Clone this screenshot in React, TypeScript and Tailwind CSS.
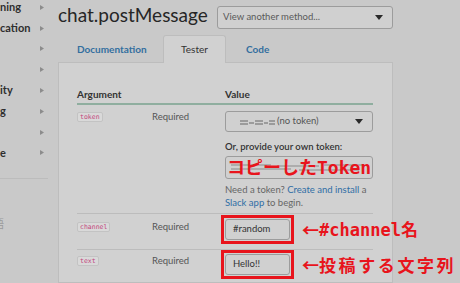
const navItems = ["ning", "cation", "", "", "ity", "g", "", "e"];

function Caret({ color = "#2a2a2a" }: { color?: string }) {
  return (
    <svg width="8" height="5" viewBox="0 0 8 5">
      <path d="M0 0h8L4 5z" fill={color} />
    </svg>
  );
}

function Code({ children }: { children: string }) {
  return (
    <span className="inline-block rounded-[2px] border border-[#c3c3c3] bg-[#d9d9d9] px-[2px] font-['DejaVu_Sans_Mono',monospace] text-[6.5px] leading-[8px] text-[#c2437b]">
      {children}
    </span>
  );
}

function Annotation({ label, wide }: { label: string; wide?: boolean }) {
  return (
    <span className="ml-[8px] flex items-center whitespace-nowrap text-[17px] font-bold leading-[20px] text-[#e8141c]">
      <span className="font-['Noto_Sans_CJK_JP',sans-serif]">←</span>
      <span
        className={
          wide
            ? "font-['Noto_Sans_CJK_JP',sans-serif] tracking-[2.6px]"
            : "font-['DejaVu_Sans_Mono','Noto_Sans_CJK_JP',monospace]"
        }
      >
        {label}
      </span>
    </span>
  );
}

function Sidebar() {
  return (
    <aside className="flex w-[58px] shrink-0 flex-col overflow-hidden">
      <div className="mt-[-3px] flex flex-col">
        {navItems.map((t, i) => (
          <div key={i} className="flex h-[20.8px] items-center justify-between pr-[14px]">
            <span className="whitespace-nowrap text-[11px] font-bold text-[#2e2e2e]">{t}</span>
            <svg width="4" height="5" viewBox="0 0 4 5">
              <path d="M0 0l4 2.5L0 5z" fill="#8c8c8c" />
            </svg>
          </div>
        ))}
      </div>
      <div className="mt-[14.6px] mr-[10px] h-px bg-[#bcbcbc]" />
      <div className="mt-[36px] ml-[-29px] whitespace-nowrap font-['Noto_Sans_CJK_JP',sans-serif] text-[11px] text-[#9a9a9a]">
        日本語
      </div>
    </aside>
  );
}

export default function App() {
  return (
    <div className="flex h-[283px] w-[460px] overflow-hidden bg-[#c9c9c9] font-['Lato','Liberation_Sans',sans-serif]">
      <Sidebar />
      <main className="flex flex-1 flex-col">
        <div className="flex h-[35px] items-start">
          <h1 className="w-[159px] pt-[5px] text-[19px] leading-[20px] text-[#262626]">chat.postMessage</h1>
          <div className="mt-[6px] flex h-[23px] w-[176px] items-center justify-between rounded-[3px] border border-[#9c9c9c] bg-[#d0d0d0] pl-[5px] pr-[9px]">
            <span className="text-[9.5px] text-[#5a5a5a]">View another method...</span>
            <Caret />
          </div>
        </div>
        <div className="relative z-10 mb-[-1px] flex h-[28px] items-center pl-[19px] text-[10px]">
          <span className="w-[86px] font-bold text-[#336f9f]">Documentation</span>
          <span className="flex h-[28px] w-[63px] items-center justify-center rounded-t-[3px] border border-b-0 border-[#bdbdbd] bg-[#d1d1d1] text-[#333]">
            Tester
          </span>
          <span className="ml-[20px] font-bold text-[#336f9f]">Code</span>
        </div>
        <section className="flex w-[335px] flex-1 flex-col border border-[#bdbdbd] bg-[#d1d1d1] pl-[18px] pr-[19px] pt-[23px]">
          <div className="grid h-[19px] grid-cols-[75px_73px_1fr] items-center border-b-2 border-[#8fae9f] text-[10px] font-bold text-[#333]">
            <span>Argument</span>
            <span />
            <span>Value</span>
          </div>

          <div className="grid grid-cols-[75px_73px_1fr] items-start border-b border-[#bcbcbc] pt-[6px] pb-[4px]">
            <div className="mt-[1px] flex">
              <Code>token</Code>
            </div>
            <span className="text-[9.5px] leading-[12px] text-[#555]">Required</span>
            <div className="flex flex-col">
              <div className="flex h-[21px] items-center justify-between rounded-[3px] border border-[#9c9c9c] bg-[#d0d0d0] pl-[13px] pr-[9px]">
                <span className="flex items-center text-[9.5px] text-[#555]">
                  <svg width="37" height="8" viewBox="0 0 37 8" className="mr-[1px]">
                    <g stroke="#666" strokeWidth="1.2">
                      <path d="M1 3h8M1 6h8M10 5h5M16 3h8M16 6h8M25 5h4M30 3h6M30 6h6" />
                    </g>
                  </svg>
                  (no token)
                </span>
                <Caret />
              </div>
              <span className="mt-[9px] text-[9.5px] font-semibold leading-[12px] text-[#333]">
                Or, provide your own token:
              </span>
              <div className="relative mt-[3px] flex h-[23px] items-center overflow-hidden rounded-[3px] border border-[#9c9c9c] bg-[#d0d0d0] pl-[1px]">
                <svg width="140" height="12" viewBox="0 0 140 12" className="absolute left-[3px] top-[5px]">
                  <g stroke="#8a8a8a" strokeWidth="1.2">
                    <path d="M2 3h40M2 7h60M50 4h40M70 8h60M95 3h40" />
                  </g>
                </svg>
                <span className="relative whitespace-nowrap font-['DejaVu_Sans_Mono','Noto_Sans_CJK_JP',monospace] text-[18px] font-bold leading-[20px] text-[#e8141c]">
                  コピーしたToken
                </span>
              </div>
              <p className="mt-[4px] text-[9.5px] leading-[13px] text-[#666]">
                Need a token? <span className="text-[#2f6ea5]">Create and install</span> a{" "}
                <span className="text-[#2f6ea5]">Slack app</span> to begin.
              </p>
            </div>
          </div>

          <div className="grid grid-cols-[75px_73px_1fr] items-start border-b border-[#bcbcbc] pt-[1px] pb-[5px]">
            <div className="mt-[7px] flex">
              <Code>channel</Code>
            </div>
            <span className="mt-[6px] text-[9.5px] leading-[12px] text-[#555]">Required</span>
            <div className="ml-[-4px] flex items-center">
              <div className="border-[3px] border-[#e8141c] p-[1px]">
                <div className="flex h-[21px] w-[65px] items-center rounded-[3px] border border-[#9c9c9c] bg-[#d0d0d0] pl-[7px] text-[9.5px] text-[#333]">
                  #random
                </div>
              </div>
              <Annotation label="#channel名" />
            </div>
          </div>

          <div className="grid grid-cols-[75px_73px_1fr] items-start pt-0">
            <div className="mt-[6px] flex">
              <Code>text</Code>
            </div>
            <span className="mt-[5px] text-[9.5px] leading-[12px] text-[#555]">Required</span>
            <div className="ml-[-4px] flex items-center">
              <div className="border-[3px] border-[#e8141c] p-[1px]">
                <div className="flex h-[21px] w-[65px] items-center rounded-[3px] border border-[#9c9c9c] bg-[#d0d0d0] pl-[7px] text-[9.5px] text-[#333]">
                  Hello!!
                </div>
              </div>
              <Annotation label="投稿する文字列" wide />
            </div>
          </div>
        </section>
      </main>
    </div>
  );
}
